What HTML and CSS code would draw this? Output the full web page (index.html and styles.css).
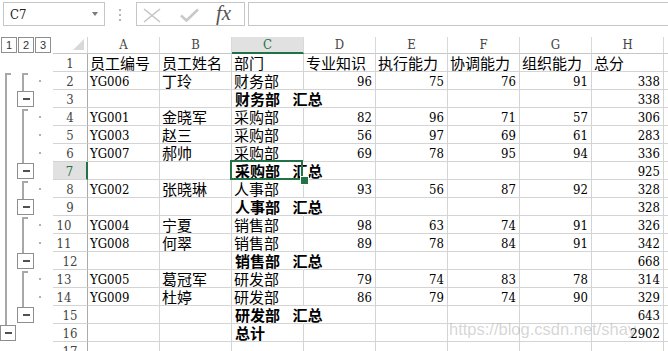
FILE: index.html
```html
<!DOCTYPE html>
<html lang="zh-CN">
<head>
<meta charset="utf-8">
<title>Excel 分类汇总</title>
<link rel="stylesheet" href="styles.css">
</head>
<body>
<div class="top">
  <div class="namebox"><span>C7</span><span class="caret"></span></div>
  <div class="sep">
    <svg width="3" height="13" viewBox="0 0 3 13"><g fill="#b4b4b4"><rect x="0" y="0" width="2" height="2"/><rect x="0" y="5" width="2" height="2"/><rect x="0" y="10" width="2" height="2"/></g></svg>
  </div>
  <div class="fxbox">
    <svg class="ic-x" width="18" height="15" viewBox="0 0 18 15"><path d="M1 1 L17 14 M17 1 L1 14" stroke="#c4c4c4" stroke-width="1.6" fill="none"/></svg>
    <svg class="ic-ok" width="19" height="14" viewBox="0 0 19 14"><path d="M1 7.5 L6.5 12.5 L18 1.5" stroke="#c9c9c9" stroke-width="2.6" fill="none"/></svg>
    <span class="fx">fx</span>
  </div>
  <div class="input"></div>
</div>

<div class="sheet">
  <div class="lv"><span class="lvb">1</span><span class="lvb">2</span><span class="lvb">3</span></div>
  <div class="corner"><svg width="11" height="11" viewBox="0 0 11 11"><polygon points="11,0 11,11 0,11" fill="#d9d9d9"/></svg></div>
  <div class="ch">A</div><div class="ch">B</div><div class="ch on">C</div><div class="ch">D</div><div class="ch">E</div><div class="ch">F</div><div class="ch">G</div><div class="ch">H</div><div class="chf"></div>

  <div class="outline">
    <svg width="53" height="306" viewBox="0 0 53 306">
      <g fill="#a8a8a8">
        <rect x="5" y="19" width="2" height="252"/><rect x="5" y="19" width="6" height="2"/>
        <rect x="22" y="19" width="2" height="18"/><rect x="22" y="19" width="6" height="2"/>
        <rect x="22" y="55" width="2" height="54"/><rect x="22" y="55" width="6" height="2"/>
        <rect x="22" y="127" width="2" height="18"/><rect x="22" y="127" width="6" height="2"/>
        <rect x="22" y="163" width="2" height="36"/><rect x="22" y="163" width="6" height="2"/>
        <rect x="22" y="217" width="2" height="36"/><rect x="22" y="217" width="6" height="2"/>
      </g>
      <g fill="#ffffff" stroke="#8e8e8e">
        <rect x="17.5" y="37.5" width="16" height="15"/>
        <rect x="17.5" y="109.5" width="16" height="15"/>
        <rect x="17.5" y="145.5" width="16" height="15"/>
        <rect x="17.5" y="199.5" width="16" height="15"/>
        <rect x="17.5" y="253.5" width="16" height="15"/>
        <rect x="0.5" y="271.5" width="15" height="15"/>
      </g>
      <g fill="#505050">
        <rect x="23" y="44" width="7" height="2"/>
        <rect x="23" y="116" width="7" height="2"/>
        <rect x="23" y="152" width="7" height="2"/>
        <rect x="23" y="206" width="7" height="2"/>
        <rect x="23" y="260" width="7" height="2"/>
        <rect x="5" y="278" width="7" height="2"/>
      </g>
      <g fill="#b0b0b0">
        <rect x="39" y="26" width="2" height="2"/>
        <rect x="39" y="62" width="2" height="2"/>
        <rect x="39" y="80" width="2" height="2"/>
        <rect x="39" y="98" width="2" height="2"/>
        <rect x="39" y="134" width="2" height="2"/>
        <rect x="39" y="170" width="2" height="2"/>
        <rect x="39" y="188" width="2" height="2"/>
        <rect x="39" y="224" width="2" height="2"/>
        <rect x="39" y="242" width="2" height="2"/>
      </g>
    </svg>
  </div>

  <div class="rh">1</div><div class="c">员工编号</div><div class="c">员工姓名</div><div class="c">部门</div><div class="c">专业知识</div><div class="c">执行能力</div><div class="c">协调能力</div><div class="c">组织能力</div><div class="c">总分</div><div class="f"></div>

  <div class="rh">2</div><div class="c t">YG006</div><div class="c">丁玲</div><div class="c">财务部</div><div class="c n">96</div><div class="c n">75</div><div class="c n">76</div><div class="c n">91</div><div class="c n">338</div><div class="f"></div>

  <div class="rh">3</div><div class="c"></div><div class="c"></div><div class="c b">财务部 汇总</div><div class="c"></div><div class="c"></div><div class="c"></div><div class="c"></div><div class="c n">338</div><div class="f"></div>

  <div class="rh">4</div><div class="c t">YG001</div><div class="c">金晓军</div><div class="c">采购部</div><div class="c n">82</div><div class="c n">96</div><div class="c n">71</div><div class="c n">57</div><div class="c n">306</div><div class="f"></div>

  <div class="rh">5</div><div class="c t">YG003</div><div class="c">赵三</div><div class="c">采购部</div><div class="c n">56</div><div class="c n">97</div><div class="c n">69</div><div class="c n">61</div><div class="c n">283</div><div class="f"></div>

  <div class="rh">6</div><div class="c t">YG007</div><div class="c">郝帅</div><div class="c">采购部</div><div class="c n">69</div><div class="c n">78</div><div class="c n">95</div><div class="c n">94</div><div class="c n">336</div><div class="f"></div>

  <div class="rh on">7</div><div class="c"></div><div class="c"></div><div class="c b sel">采购部 汇总</div><div class="c"></div><div class="c"></div><div class="c"></div><div class="c"></div><div class="c n">925</div><div class="f"></div>

  <div class="rh">8</div><div class="c t">YG002</div><div class="c">张晓琳</div><div class="c">人事部</div><div class="c n">93</div><div class="c n">56</div><div class="c n">87</div><div class="c n">92</div><div class="c n">328</div><div class="f"></div>

  <div class="rh">9</div><div class="c"></div><div class="c"></div><div class="c b">人事部 汇总</div><div class="c"></div><div class="c"></div><div class="c"></div><div class="c"></div><div class="c n">328</div><div class="f"></div>

  <div class="rh w">10</div><div class="c t">YG004</div><div class="c">宁夏</div><div class="c">销售部</div><div class="c n">98</div><div class="c n">63</div><div class="c n">74</div><div class="c n">91</div><div class="c n">326</div><div class="f"></div>

  <div class="rh w">11</div><div class="c t">YG008</div><div class="c">何翠</div><div class="c">销售部</div><div class="c n">89</div><div class="c n">78</div><div class="c n">84</div><div class="c n">91</div><div class="c n">342</div><div class="f"></div>

  <div class="rh">12</div><div class="c"></div><div class="c"></div><div class="c b">销售部 汇总</div><div class="c"></div><div class="c"></div><div class="c"></div><div class="c"></div><div class="c n">668</div><div class="f"></div>

  <div class="rh w">13</div><div class="c t">YG005</div><div class="c">葛冠军</div><div class="c">研发部</div><div class="c n">79</div><div class="c n">74</div><div class="c n">83</div><div class="c n">78</div><div class="c n">314</div><div class="f"></div>

  <div class="rh w">14</div><div class="c t">YG009</div><div class="c">杜婷</div><div class="c">研发部</div><div class="c n">86</div><div class="c n">79</div><div class="c n">74</div><div class="c n">90</div><div class="c n">329</div><div class="f"></div>

  <div class="rh">15</div><div class="c"></div><div class="c"></div><div class="c b">研发部 汇总</div><div class="c"></div><div class="c"></div><div class="c"></div><div class="c"></div><div class="c n">643</div><div class="f"></div>

  <div class="rh">16</div><div class="c"></div><div class="c"></div><div class="c b fit">总计</div><div class="c"></div><div class="c"></div><div class="c"></div><div class="c"></div><div class="c n">2902</div><div class="f"></div>

  <div class="rh">17</div><div class="c"></div><div class="c"></div><div class="c"></div><div class="c"></div><div class="c"></div><div class="c"></div><div class="c"></div><div class="c"></div><div class="f"></div>
</div>

<div class="watermark">https://blog.csdn.net/shay</div>
</body>
</html>
```

FILE: styles.css
```css
* { box-sizing: border-box; }
html, body { margin: 0; padding: 0; background: #ffffff; }
body {
  width: 668px;
  height: 351px;
  overflow: hidden;
  position: relative;
  font-family: "Noto Sans CJK SC", sans-serif;
  color: #000;
}

/* formula bar */
.top { display: flex; height: 37px; padding-top: 2px; }
.namebox {
  margin-left: 3px;
  width: 102px;
  height: 24px;
  border: 1px solid #c6c6c6;
  display: flex;
  align-items: center;
  justify-content: space-between;
  padding: 0 6px 0 6px;
  font-family: "DejaVu Serif Condensed", "DejaVu Serif", serif;
  font-stretch: condensed;
  font-size: 13px;
  color: #222;
}
.caret {
  width: 0; height: 0;
  border-left: 3px solid transparent;
  border-right: 3px solid transparent;
  border-top: 4px solid #7a7a7a;
}
.sep { width: 31px; display: flex; justify-content: center; padding-top: 7px; }
.sep svg { display: block; }
.fxbox {
  width: 109px;
  height: 24px;
  border: 1px solid #c6c6c6;
  display: flex;
  align-items: center;
}
.ic-x { margin-left: 6px; margin-top: 3px; }
.ic-ok { margin-left: 19px; margin-top: 2px; }
.fx {
  margin-left: 17px;
  font-family: "Liberation Serif", serif;
  font-style: italic;
  font-size: 21px;
  line-height: 22px;
  color: #555;
  margin-top: -2px;
}
.input { flex: 1; margin-left: 3px; height: 24px; border: 1px solid #c6c6c6; border-right: none; }

/* sheet */
.sheet {
  display: grid;
  grid-template-columns: 53px 35px repeat(8, 72px) 1fr;
  grid-template-rows: 17px repeat(17, 18px);
}
.lv { display: flex; padding-left: 1px; }
.lvb {
  width: 16px; height: 16px;
  margin-right: 1px;
  border: 1px solid #8e8e8e;
  font-family: "Liberation Sans", sans-serif;
  font-size: 11px;
  line-height: 14px;
  text-align: center;
  color: #333;
}
.corner {
  border-right: 1px solid #d4d4d4;
  border-bottom: 1px solid #c6c6c6;
  display: flex;
  justify-content: flex-end;
  align-items: flex-end;
  padding: 0 3px 3px 0;
}
.corner svg { display: block; }
.ch, .rh {
  font-family: "DejaVu Serif Condensed", "DejaVu Serif", serif;
  font-stretch: condensed;
  font-size: 13px;
  color: #444;
  text-align: center;
}
.ch {
  line-height: 16px;
  border-right: 1px solid #d9d9d9;
  border-bottom: 1px solid #c6c6c6;
}
.ch.on { background: #e1e1e1; color: #217346; border-bottom: 2px solid #217346; }
.chf { border-bottom: 1px solid #c6c6c6; }
.outline { grid-column: 1; grid-row: 2 / span 17; overflow: hidden; }
.outline svg { display: block; }

.rh {
  line-height: 17px;
  border-right: 1px solid #ababab;
  border-bottom: 1px solid #d4d4d4;
  padding-top: 1px;
}
.rh.w { padding-right: 12px; }
.rh.on { background: #e1e1e1; color: #217346; border-right: 2px solid #217346; }

.c {
  border-right: 1px solid #d4d4d4;
  border-bottom: 1px solid #d4d4d4;
  font-size: 15px;
  line-height: 17px;
  padding: 0 2px;
  white-space: nowrap;
  overflow: visible;
}
.t, .n {
  font-family: "DejaVu Serif Condensed", "DejaVu Serif", serif;
  font-stretch: condensed;
  font-size: 13px;
  padding-top: 1px;
}
.n { text-align: right; padding-right: 3px; }
.b {
  font-weight: 700;
  border-right-color: transparent;
  word-spacing: 9px;
  padding-left: 3px;
}
.b.fit { border-right-color: #d4d4d4; }
.f { border-bottom: 1px solid #d4d4d4; }

.sel { position: relative; }
.sel::after {
  content: "";
  position: absolute;
  left: -2px; top: -2px; right: 0; bottom: -1px;
  border: 2px solid #217346;
}
.sel::before {
  content: "";
  position: absolute;
  left: 68px; top: 14px;
  width: 7px; height: 7px;
  background: #217346;
  border: 1px solid #ffffff;
  z-index: 1;
}

.watermark {
  position: absolute;
  left: 449px;
  top: 320px;
  font-family: "Liberation Sans", sans-serif;
  font-size: 16.5px;
  color: rgba(150, 150, 150, 0.4);
  white-space: nowrap;
}
```
